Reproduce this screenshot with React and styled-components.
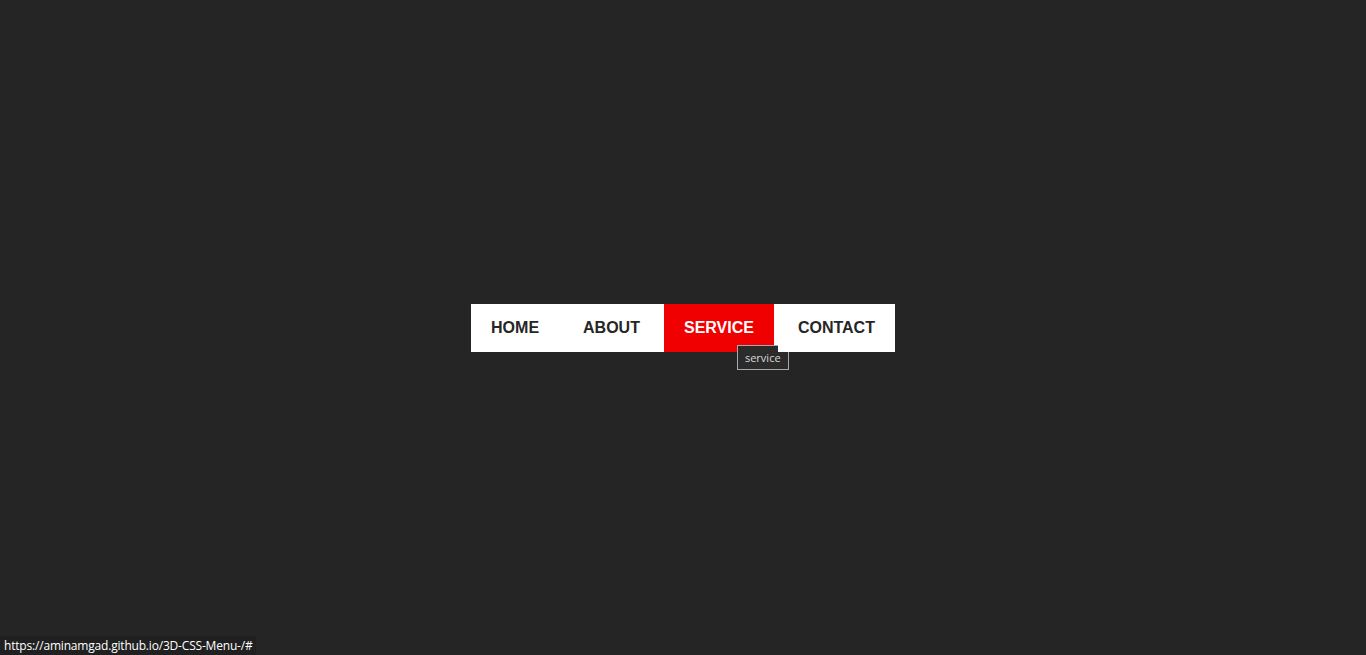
import styled, { createGlobalStyle } from 'styled-components'

const Global = createGlobalStyle`
  html, body { margin: 0; padding: 0; background: #252525; }
  #root { min-height: 100vh; }
`

const Page = styled.div`
  min-height: 100vh;
  display: flex;
  align-items: center;
  justify-content: center;
`

const Menu = styled.ul`
  display: flex;
  gap: 4px;
  margin: 0;
  padding: 0;
  list-style: none;
  background: #fff;
`

const Item = styled.li`
  position: relative;
`

const Link = styled.a`
  display: block;
  height: 48px;
  line-height: 48px;
  padding: 0 20px;
  font-family: "Liberation Sans", Arial, sans-serif;
  font-weight: 700;
  font-size: 16px;
  text-decoration: none;
  color: ${p => p.$active ? '#fff' : '#262626'};
  background: ${p => p.$active ? '#f00000' : '#fff'};
`

const Tip = styled.div`
  position: absolute;
  left: 73px;
  top: 41px;
  padding: 4px 7px 3px 7px;
  background: #2b2b2b;
  border: 1px solid #a8a8a8;
  color: #d8d8d8;
  font-family: "Open Sans", "DejaVu Sans", sans-serif;
  font-size: 11px;
  line-height: 16px;
  white-space: nowrap;
`

const Status = styled.div`
  position: fixed;
  left: 0;
  bottom: 0;
  padding: 2px 3px 1px 4px;
  background: #202020;
  color: #fff;
  font-family: "Open Sans", "DejaVu Sans", sans-serif;
  font-size: 12px;
  line-height: 16px;
  letter-spacing: -0.19px;
`

const items = ['HOME', 'ABOUT', 'SERVICE', 'CONTACT']

export default function App() {
  return (
    <>
      <Global />
      <Page>
        <Menu>
          {items.map(t => (
            <Item key={t}>
              <Link href="#" $active={t === 'SERVICE'}>{t}</Link>
              {t === 'SERVICE' && <Tip>service</Tip>}
            </Item>
          ))}
        </Menu>
      </Page>
      <Status>https://aminamgad.github.io/3D-CSS-Menu-/#</Status>
    </>
  )
}
